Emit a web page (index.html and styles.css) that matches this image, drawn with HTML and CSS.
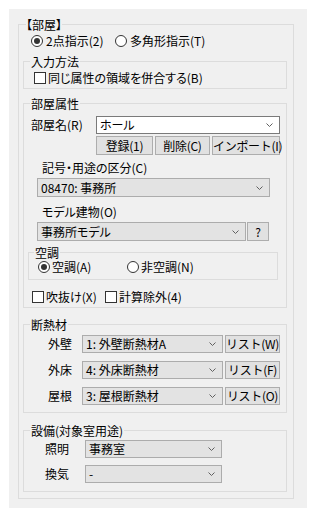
FILE: index.html
```html
<!DOCTYPE html>
<html lang="ja">
<head>
    <meta charset="UTF-8">
    <meta name="viewport" content="width=device-width, initial-scale=1.0">
    <title>部屋</title>
    <link rel="stylesheet" href="styles.css">
</head>
<body>
    <div class="panel">
        <fieldset class="group outer">
            <legend>【部屋】</legend>
            <div class="outer-body">
                <div class="mode-row">
                    <label class="radio mode-first"><span class="radio-mark checked"></span>2点指示(2)</label>
                    <label class="radio"><span class="radio-mark"></span>多角形指示(T)</label>
                </div>

                <fieldset class="group">
                    <legend>入力方法</legend>
                    <div class="merge-row">
                        <label class="check"><span class="check-mark"></span>同じ属性の領域を併合する(B)</label>
                    </div>
                </fieldset>

                <fieldset class="group room-attr">
                    <legend>部屋属性</legend>
                    <div class="name-row">
                        <span class="name-label">部屋名(R)</span>
                        <div class="combo editable">
                            <span>ホール</span>
                            <svg class="arrow" width="7" height="4" viewBox="0 0 7 4"><polyline points="0.5,0.5 3.5,3.5 6.5,0.5" /></svg>
                        </div>
                    </div>
                    <div class="btn-row">
                        <button class="btn btn-reg">登録(1)</button>
                        <button class="btn btn-del">削除(C)</button>
                        <button class="btn btn-imp">インポート(I)</button>
                    </div>

                    <div class="field-label">記号・用途の区分(C)</div>
                    <div class="combo usage">
                        <span>08470: 事務所</span>
                        <svg class="arrow" width="7" height="4" viewBox="0 0 7 4"><polyline points="0.5,0.5 3.5,3.5 6.5,0.5" /></svg>
                    </div>

                    <div class="field-label model-label">モデル建物(O)</div>
                    <div class="model-row">
                        <div class="combo model">
                            <span>事務所モデル</span>
                            <svg class="arrow" width="7" height="4" viewBox="0 0 7 4"><polyline points="0.5,0.5 3.5,3.5 6.5,0.5" /></svg>
                        </div>
                        <button class="btn btn-help">?</button>
                    </div>

                    <fieldset class="group aircon">
                        <legend>空調</legend>
                        <div class="aircon-row">
                            <label class="radio aircon-first"><span class="radio-mark checked"></span>空調(A)</label>
                            <label class="radio"><span class="radio-mark"></span>非空調(N)</label>
                        </div>
                    </fieldset>

                    <div class="flag-row">
                        <label class="check flag-first"><span class="check-mark"></span>吹抜け(X)</label>
                        <label class="check"><span class="check-mark"></span>計算除外(4)</label>
                    </div>
                </fieldset>

                <fieldset class="group insul">
                    <legend>断熱材</legend>
                    <div class="insul-row">
                        <span class="insul-label">外壁</span>
                        <div class="combo insul-combo">
                            <span>1: 外壁断熱材A</span>
                            <svg class="arrow" width="7" height="4" viewBox="0 0 7 4"><polyline points="0.5,0.5 3.5,3.5 6.5,0.5" /></svg>
                        </div>
                        <button class="btn btn-list">リスト(W)</button>
                    </div>
                    <div class="insul-row">
                        <span class="insul-label">外床</span>
                        <div class="combo insul-combo">
                            <span>4: 外床断熱材</span>
                            <svg class="arrow" width="7" height="4" viewBox="0 0 7 4"><polyline points="0.5,0.5 3.5,3.5 6.5,0.5" /></svg>
                        </div>
                        <button class="btn btn-list">リスト(F)</button>
                    </div>
                    <div class="insul-row">
                        <span class="insul-label">屋根</span>
                        <div class="combo insul-combo">
                            <span>3: 屋根断熱材</span>
                            <svg class="arrow" width="7" height="4" viewBox="0 0 7 4"><polyline points="0.5,0.5 3.5,3.5 6.5,0.5" /></svg>
                        </div>
                        <button class="btn btn-list">リスト(O)</button>
                    </div>
                </fieldset>

                <fieldset class="group equip">
                    <legend>設備(対象室用途)</legend>
                    <div class="equip-row">
                        <span class="equip-label">照明</span>
                        <div class="combo equip-combo">
                            <span>事務室</span>
                            <svg class="arrow" width="7" height="4" viewBox="0 0 7 4"><polyline points="0.5,0.5 3.5,3.5 6.5,0.5" /></svg>
                        </div>
                    </div>
                    <div class="equip-row">
                        <span class="equip-label">換気</span>
                        <div class="combo equip-combo">
                            <span>-</span>
                            <svg class="arrow" width="7" height="4" viewBox="0 0 7 4"><polyline points="0.5,0.5 3.5,3.5 6.5,0.5" /></svg>
                        </div>
                    </div>
                </fieldset>
            </div>
        </fieldset>
    </div>
</body>
</html>
```

FILE: styles.css
```css
* {
    box-sizing: border-box;
}

body {
    margin: 0;
    background-color: #ffffff;
    color: #000000;
    font-family: "Noto Sans CJK JP", sans-serif;
    font-size: 12px;
    line-height: 14px;
    font-feature-settings: "palt";
}

.panel {
    margin: 9px 0 0 9px;
    width: 298px;
    height: 499px;
    background-color: #f0f0f0;
    padding: 9px 0 0 9px;
}

/* Group boxes */
.group {
    margin: 0;
    padding: 0;
    border: 1px solid #dcdcdc;
    min-width: 0;
}

.group > legend {
    padding: 0 1px;
    margin-left: 6px;
    line-height: 13px;
    height: 13px;
}

.outer {
    width: 276px;
}

.outer > legend {
    margin-left: 7px;
    padding: 0;
}

.outer-body {
    padding: 0 6px 6px 4px;
}

/* Radio / check marks */
.radio,
.check {
    display: flex;
    align-items: center;
    white-space: nowrap;
}

.radio-mark {
    width: 12px;
    height: 12px;
    border: 1px solid #333333;
    border-radius: 50%;
    background-color: #ffffff;
    margin-right: 3px;
    display: grid;
    place-items: center;
    flex: none;
}

.radio-mark.checked::after {
    content: "";
    width: 6px;
    height: 6px;
    border-radius: 50%;
    background-color: #333333;
}

.check-mark {
    width: 12px;
    height: 12px;
    border: 1px solid #333333;
    background-color: #ffffff;
    margin-right: 2px;
    flex: none;
}

/* Mode */
.mode-row {
    display: flex;
    align-items: center;
    height: 20px;
    padding-left: 8px;
    margin-bottom: 4px;
}

.mode-first {
    width: 84px;
}

.merge-row {
    display: flex;
    align-items: center;
    height: 20px;
    padding-left: 10px;
}

/* Combo boxes and buttons */
.combo {
    display: flex;
    align-items: center;
    justify-content: space-between;
    height: 19px;
    padding: 0 6px 0 3px;
    background-color: #e3e3e3;
    border: 1px solid #acacac;
    white-space: nowrap;
}

.combo.editable {
    width: 184px;
    height: 18px;
    background-color: #ffffff;
    border-color: #7a7a7a;
}

.arrow {
    flex: none;
}

.arrow polyline {
    fill: none;
    stroke: #606060;
    stroke-width: 1;
}

.btn {
    font-family: inherit;
    font-size: 12px;
    line-height: 14px;
    color: #000000;
    background-color: #e1e1e1;
    border: 1px solid #adadad;
    padding: 0;
    margin: 0;
    white-space: nowrap;
    letter-spacing: -0.3px;
}

/* Room attributes */
.room-attr {
    margin-top: 8px;
}

.name-row {
    display: flex;
    align-items: center;
    margin-top: 6px;
}

.name-label {
    width: 72px;
    padding-left: 7px;
}

.btn-row {
    display: flex;
    gap: 2px;
    height: 19px;
    margin: 2px 0 0 72px;
}

.btn-reg {
    width: 57px;
}

.btn-del {
    width: 55px;
}

.btn-imp {
    width: 68px;
}

.field-label {
    margin-top: 6px;
    height: 14px;
    padding-left: 18px;
}

.model-label {
    margin-top: 8px;
}

.combo.usage {
    width: 233px;
    margin: 3px 0 0 13px;
}

.model-row {
    display: flex;
    gap: 1px;
    height: 19px;
    margin: 3px 0 0 13px;
}

.combo.model {
    width: 209px;
}

.btn-help {
    width: 22px;
}

.aircon {
    width: 250px;
    margin: 5px 0 0 4px;
}

.aircon > legend {
    margin-left: 5px;
}

.aircon-row {
    display: flex;
    align-items: center;
    height: 16px;
    padding-left: 9px;
    margin-bottom: 4px;
}

.aircon-row .radio-mark {
    margin-right: 2px;
}

.aircon-first {
    width: 89px;
}

.flag-row {
    display: flex;
    align-items: center;
    height: 20px;
    margin-top: 7px;
    padding-left: 8px;
}

.flag-first {
    width: 73px;
}

/* Insulation */
.insul {
    margin-top: 10px;
    padding-bottom: 7px;
}

.insul-row {
    display: flex;
    align-items: center;
    height: 18px;
    margin-top: 8px;
}

.insul-row:first-of-type {
    margin-top: 4px;
}

.insul-label {
    width: 48px;
    text-align: right;
    margin-right: 10px;
}

.combo.insul-combo {
    width: 141px;
    height: 18px;
}

.btn-list {
    width: 55px;
    height: 18px;
    margin-left: 2px;
}

/* Equipment */
.equip {
    margin-top: 11px;
    padding-bottom: 8px;
}

.equip-row {
    display: flex;
    align-items: center;
    height: 18px;
    margin-top: 7px;
}

.equip-row:first-of-type {
    margin-top: 3px;
}

.equip-label {
    width: 45px;
    text-align: right;
    margin-right: 16px;
}

.combo.equip-combo {
    width: 137px;
    height: 18px;
}
```
